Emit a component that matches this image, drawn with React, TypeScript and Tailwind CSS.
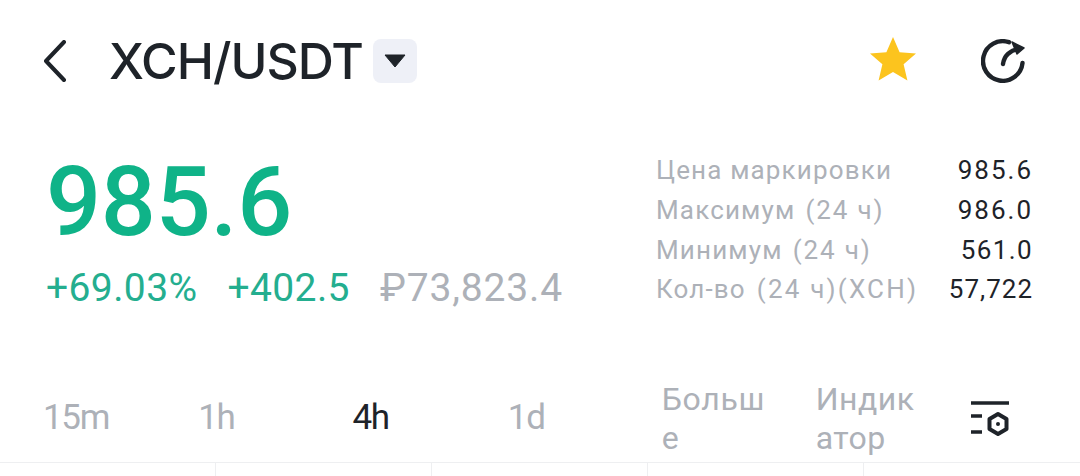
const stats = [
  { label: "Цена маркировки", suffix: "", suffixClass: "", value: "985.6", valueClass: "tracking-[2px]" },
  { label: "Максимум", suffix: "(24 ч)", suffixClass: "ml-[10px] tracking-[1.9px]", value: "986.0", valueClass: "tracking-[2px]" },
  { label: "Минимум", suffix: "(24 ч)", suffixClass: "ml-[10px] tracking-[1.9px]", value: "561.0", valueClass: "tracking-[1.4px]" },
  { label: "Кол-во", suffix: "(24 ч)(XCH)", suffixClass: "ml-[11px] tracking-[2.2px]", value: "57,722", valueClass: "tracking-[1px]" },
];

export default function App() {
  return (
    <div className="w-[1080px] h-[476px] overflow-hidden bg-white flex flex-col font-['Roboto',sans-serif]">
      {/* header */}
      <div className="h-[121px] flex items-center pl-[43px] pr-[55px]">
        <svg width="24" height="42" viewBox="0 0 24 42" fill="none">
          <path d="M21 2 L3 21 L21 40" stroke="#1e2329" strokeWidth="4" strokeLinecap="round" strokeLinejoin="round" />
        </svg>
        <h1 className="ml-[42px] font-['Inter',sans-serif] text-[50px] leading-none font-medium tracking-[-1px] text-[#1e2329]">XCH/USDT</h1>
        <div className="ml-[10px] w-[44px] h-[44px] rounded-lg bg-[#eef0f7] flex items-center justify-center">
          <svg width="22" height="14" viewBox="0 0 22 14">
            <path d="M1 1 H21 L11 13 Z" fill="#1e2329" stroke="#1e2329" strokeLinejoin="round" />
          </svg>
        </div>
        <svg className="ml-auto -mt-[4px]" width="48" height="46" viewBox="0 0 48 46">
          <path d="M24 1 L30.6 16.2 L47 17.5 L34.6 28.3 L38.4 44.5 L24 36 L9.6 44.5 L13.4 28.3 L1 17.5 L17.4 16.2 Z" fill="#fcc41e" />
        </svg>
        <svg className="ml-[64px]" width="44" height="44" viewBox="0 0 44 44" fill="none" stroke="#1e2329" strokeWidth="4.4" strokeLinecap="round">
          <path d="M41.5 24 A19.8 19.8 0 1 1 28 3.2" />
          <path d="M22 25 C23 17 29 11 38 10" />
          <path d="M31 3 L43 9 L36 15 Z" fill="#1e2329" strokeWidth="1.5" strokeLinejoin="round" />
        </svg>
      </div>

      {/* price + stats */}
      <div className="h-[259px] flex pl-[46px] pr-[47px]">
        <div className="flex-1">
          <div className="mt-[33px] text-[97px] leading-[97px] font-medium tracking-[-0.3px] text-[#0fb388]">985.6</div>
          <div className="mt-[17px] flex items-center text-[39px] leading-[40px] tracking-[0.4px] whitespace-nowrap">
            <span className="text-[#24ae8f]">+69.03%</span>
            <span className="ml-[30px] text-[#24ae8f]">+402.5</span>
            <span className="ml-[30px] text-[#adb1b8] tracking-[0.85px]">₽73,823.4</span>
          </div>
        </div>
        <div className="w-[377px] mt-[30px] flex flex-col">
          {stats.map((s) => (
            <div key={s.label} className="h-[39.7px] flex items-center justify-between text-[26px] whitespace-nowrap">
              <span className="text-[#adb1b8] tracking-[1.15px]">
                {s.label}
                {s.suffix && <span className={s.suffixClass}>{s.suffix}</span>}
              </span>
              <span className={`text-[#1e2329] ${s.valueClass}`}>{s.value}</span>
            </div>
          ))}
        </div>
      </div>

      {/* interval tabs */}
      <div className="h-[82px] flex items-center text-[#adb1b8]">
        <span className="ml-[43px] -mt-[6px] text-[35px] tracking-[-1.3px]">15m</span>
        <span className="ml-[89px] -mt-[6px] text-[35px] tracking-[-1.3px]">1h</span>
        <span className="ml-[118px] -mt-[6px] text-[35px] tracking-[-1.3px] text-[#1e2329]">4h</span>
        <span className="ml-[119px] -mt-[6px] text-[35px] tracking-[-1.3px]">1d</span>
        <span className="ml-[117px] -mt-[4px] w-[105px] break-all text-[32px] leading-[39px] tracking-[0.7px]">Больше</span>
        <span className="ml-[49px] -mt-[4px] w-[105px] break-all text-[32px] leading-[39px] tracking-[0.5px]">Индикатор</span>
        <svg className="ml-[50px] -mt-[5px]" width="38" height="36" viewBox="0 0 38 36" fill="none" stroke="#1e2329">
          <path d="M0 2 H38" strokeWidth="3.5" />
          <path d="M0 15 H11 M0 31 H11" strokeWidth="3.5" />
          <path d="M27 13 L35.5 18 V28 L27 33 L18.5 28 V18 Z" strokeWidth="4" strokeLinejoin="round" />
          <circle cx="27" cy="23" r="2" fill="#1e2329" stroke="none" />
        </svg>
      </div>

      {/* top of the chart grid */}
      <div className="flex-1 grid grid-cols-5 border-t border-[#eeeff1]">
        <div className="border-r border-[#eeeff1]" />
        <div className="border-r border-[#eeeff1]" />
        <div className="border-r border-[#eeeff1]" />
        <div className="border-r border-[#eeeff1]" />
        <div />
      </div>
    </div>
  );
}
